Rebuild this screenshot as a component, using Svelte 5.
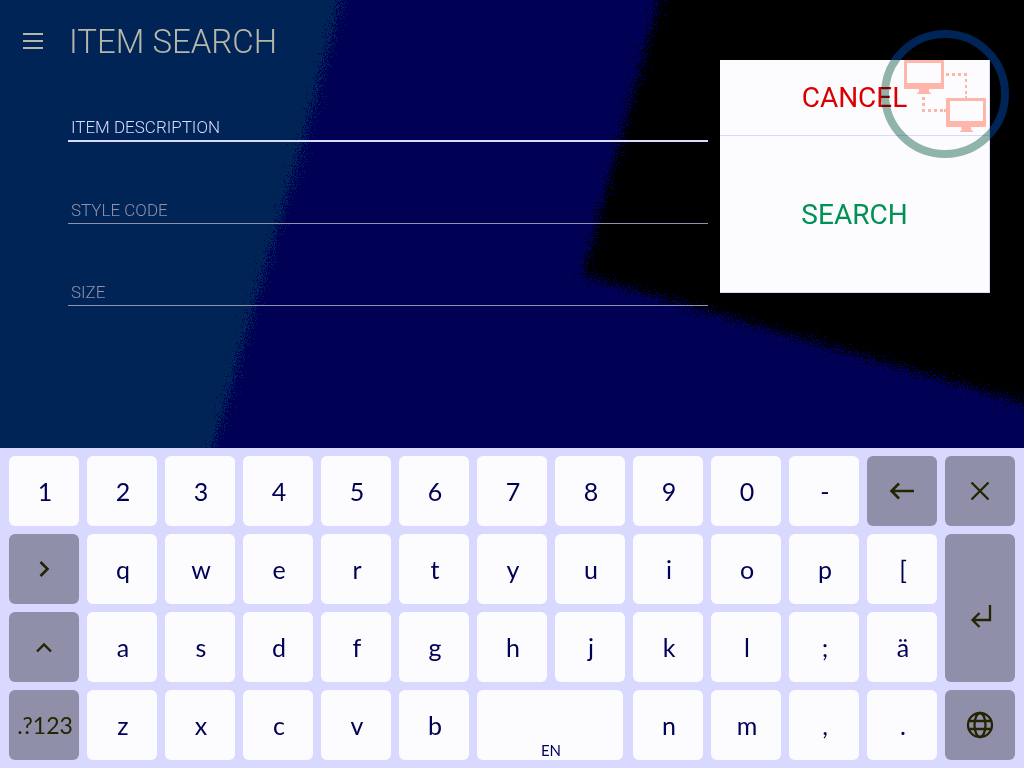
<script>
  const keys = [
    ...[...'1234567890-'].map((c) => ({ label: c })),
    { icon: 'back', name: 'Backspace' },
    { icon: 'close', name: 'Close keyboard' },
    { icon: 'next', name: 'Next' },
    ...[...'qwertyuiop['].map((c) => ({ label: c })),
    { icon: 'enter', name: 'Enter', tall: true },
    { icon: 'shift', name: 'Shift' },
    ...[...'asdfghjkl;ä'].map((c) => ({ label: c })),
    { label: '.?123', dark: true },
    ...[...'zxcvb'].map((c) => ({ label: c })),
    { label: 'EN', space: true },
    ...[...'nm,.'].map((c) => ({ label: c })),
    { icon: 'globe', name: 'Language' }
  ];

  const fields = [
    { id: 'description', label: 'ITEM DESCRIPTION', active: true },
    { id: 'style', label: 'STYLE CODE' },
    { id: 'size', label: 'SIZE' }
  ];
</script>

<div class="screen">
  <section class="top">
    <svg class="backdrop" viewBox="0 0 1024 448" preserveAspectRatio="none" aria-hidden="true">
      <defs>
        <filter id="grain" filterUnits="userSpaceOnUse" x="-40" y="-40" width="1104" height="528" color-interpolation-filters="sRGB">
          <feTurbulence type="fractalNoise" baseFrequency="0.9" numOctaves="2" seed="4" result="noise" />
          <feDisplacementMap in="SourceGraphic" in2="noise" scale="40" xChannelSelector="R" yChannelSelector="G" />
        </filter>
      </defs>
      <g filter="url(#grain)" shape-rendering="crispEdges">
        <polygon points="-40,-40 352,-40 341,0 304,140 254,305 213,448 201,488 -40,488" fill="#002455" />
        <polygon points="670,-40 659,0 583,275 1024,403 1064,414 1064,-40" fill="#000" />
      </g>
    </svg>

    <main>
      <header>
        <button class="menu" aria-label="Menu">
          <svg width="20" height="16" viewBox="0 0 20 16"><path d="M0 1h20M0 8h20M0 15h20" stroke="#b6b6aa" stroke-width="2" /></svg>
        </button>
        <h1>ITEM SEARCH</h1>
      </header>
      <form>
        {#each fields as f}
          <div class="field" class:active={f.active}>
            <label for={f.id}>{f.label}</label>
            <input id={f.id} type="text" />
          </div>
        {/each}
      </form>
    </main>

    <aside>
      <button class="cancel">CANCEL</button>
      <button class="search">SEARCH</button>
      <svg class="network" width="128" height="128" viewBox="0 0 128 128" aria-hidden="true">
        <defs>
          <clipPath id="outside"><path d="M0 0H128V128H109V30H0Z" /></clipPath>
          <clipPath id="inside"><path d="M0 30H109V128H0Z" /></clipPath>
        </defs>
        <circle cx="64" cy="64" r="60" fill="none" stroke="#002455" stroke-width="8" clip-path="url(#outside)" />
        <circle class="tint" cx="64" cy="64" r="60" fill="none" stroke="#92b6aa" stroke-width="8" clip-path="url(#inside)" />
        <g fill="#ffb6aa">
          <path fill-rule="evenodd" d="M24 30h38q1 0 1 1v27q0 1-1 1H24q-1 0-1-1V31q0-1 1-1ZM26 33v20h34V33Z" />
          <path d="M38 59h10v3l2 1v1H36v-1l2-1Z" />
          <path fill-rule="evenodd" d="M66 68h38q1 0 1 1v27q0 1-1 1H66q-1 0-1-1V69q0-1 1-1ZM69 71v20h33V71Z" />
          <path d="M80 97h10v3l2 1v1H79v-1l2-1Z" />
          <path d="M65 43h3v3h-3zM71 43h3v3h-3zM77 43h3v3h-3zM83 43h3v3h-3zM84 49h2v3h-2zM84 55h2v3h-2zM84 61h2v3h-2zM84 66h2v2h-2z" />
          <path d="M41 67h3v3h-3zM41 73h3v3h-3zM41 79h3v3h-3zM47 79h3v3h-3zM53 79h3v3h-3zM59 79h3v3h-3zM63 79h2v3h-2z" />
        </g>
      </svg>
    </aside>
  </section>

  <section class="keyboard" aria-label="Keyboard">
    {#each keys as k}
      <button class="key" class:dark={k.icon || k.dark} class:tall={k.tall} class:space={k.space} class:code={k.dark} aria-label={k.name}>
        {#if k.icon}
          <svg width="30" height="30" viewBox="0 0 30 30" fill="none" stroke="#242400" stroke-width="2.6">
            {#if k.icon === 'back'}
              <path d="M27 15H4M12 7.500 4.500 15 12 22.500" />
            {:else if k.icon === 'close'}
              <path d="M6.500 6.500 23.500 23.500M23.500 6.500 6.500 23.500" stroke-width="2.3" />
            {:else if k.icon === 'next'}
              <path d="M11.500 8 18.500 15 11.500 22" />
            {:else if k.icon === 'shift'}
              <path d="M8 19.500 15 12.500 22 19.500" stroke-width="2.3" />
            {:else if k.icon === 'enter'}
              <path d="M25 12V27H8M14.500 20 7.500 27 14.500 34" stroke-width="2.3" />
            {:else}
              <circle cx="15" cy="15" r="12" stroke-width="2.3" />
              <ellipse cx="15" cy="15" rx="5.500" ry="12" stroke-width="2.3" />
              <path d="M4 11H26M4 19H26" stroke-width="2.3" />
            {/if}
          </svg>
        {:else}
          {k.label}
        {/if}
      </button>
    {/each}
  </section>
</div>

<style>
  :global(body) { margin: 0; background: #d9d9ff; }
  * { box-sizing: border-box; }
  .screen {
    min-height: 100vh;
    display: flex;
    flex-direction: column;
    font-family: Roboto, "Liberation Sans", sans-serif;
    font-weight: 300;
  }
  button { border: 0; padding: 0; margin: 0; background: none; font: inherit; color: inherit; }
  .top {
    position: relative;
    flex: 1;
    display: grid;
    grid-template-columns: 1fr 270px;
    align-items: start;
    gap: 12px;
    padding-right: 34px;
    background: #000055;
  }
  .backdrop { position: absolute; inset: 0; width: 100%; height: 100%; overflow: hidden; }
  main, aside { position: relative; }
  header { display: flex; align-items: center; padding-top: 22px; }
  .menu { width: 69px; height: 38px; padding-left: 23px; display: flex; align-items: center; }
  h1 { margin: 0; padding-top: 2px; font-size: 33px; line-height: 36px; font-weight: 300; color: #b6b6aa; }
  form { padding-left: 68px; }
  .field { display: grid; height: 82px; align-items: end; color: #9292aa; }
  .field label, .field input { grid-area: 1 / 1; }
  label { padding: 0 0 4px 3px; font-size: 17px; line-height: 20px; }
  input {
    width: 100%;
    height: 36px;
    padding: 0 4px;
    border: 0;
    border-bottom: 1px solid #9292aa;
    outline: 0;
    background: none;
    font: inherit;
    color: inherit;
  }
  .active { color: #dbdbff; }
  .active label { padding-bottom: 5px; }
  .active input { border-bottom: 2px solid #dbdbff; }
  aside {
    margin-top: 60px;
    display: flex;
    flex-direction: column;
    background: #fcfcff;
    border: solid #d9d9ff;
    border-width: 0 1px 1px 0;
    font-size: 28px;
    font-weight: 400;
  }
  .cancel { height: 76px; border-bottom: 1px solid #d9d9ff; color: #db0000; }
  .search { height: 156px; color: #009255; }
  .network { position: absolute; top: -30px; right: -20px; pointer-events: none; }
  .tint { mix-blend-mode: multiply; }
  .keyboard {
    display: grid;
    grid-template-columns: repeat(13, 1fr);
    grid-auto-rows: 70px;
    gap: 8px;
    padding: 8px 9px;
    background: #d9d9ff;
    font-family: Lato, "Liberation Sans", sans-serif;
    font-size: 25px;
    font-weight: 400;
    color: #000055;
  }
  .key {
    display: flex;
    align-items: center;
    justify-content: center;
    padding-left: 2px;
    border-radius: 6px;
    background: #fcfcff;
  }
  .dark { padding: 0; background: #908faa; color: #242400; }
  .dark svg { overflow: visible; }
  .code { font-size: 23px; padding-left: 2px; }
  .tall { grid-row: span 2; }
  .space { grid-column: span 2; margin-right: 2px; align-items: flex-end; font-size: 15px; line-height: 20px; }
</style>
